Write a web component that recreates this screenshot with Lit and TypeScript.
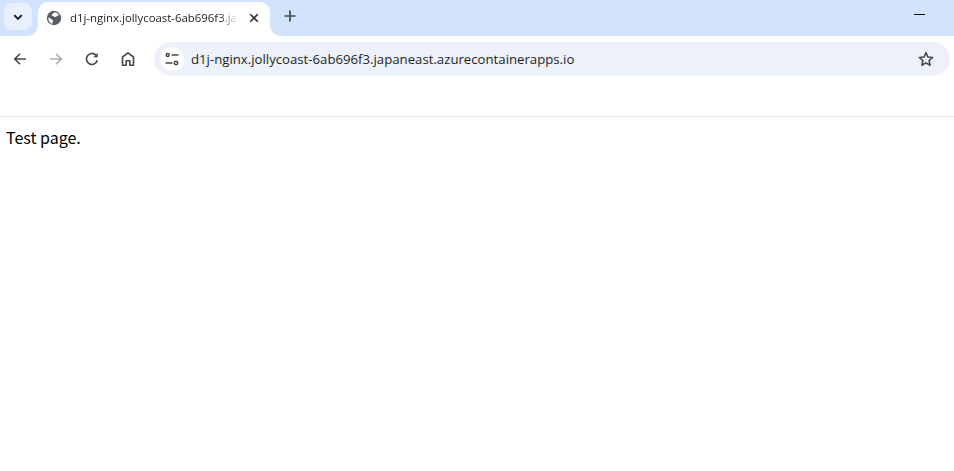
import { LitElement, html, css } from "lit";
import { customElement } from "lit/decorators.js";

@customElement("app-root")
export class AppRoot extends LitElement {
  static styles = css`
    :host { display: block; width: 954px; height: 471px; background: #fff; overflow: hidden; font-family: "Open Sans", "Noto Sans", sans-serif; color: #1f1f1f; }
    svg { display: block; }
    .strip { height: 36px; background: #d3e3fd; display: flex; align-items: flex-start; padding-left: 4px; box-sizing: border-box; }
    .search { width: 28px; height: 27px; margin-top: 3px; border-radius: 8px; background: #e8f0fe; display: flex; align-items: center; justify-content: center; }
    .tab { position: relative; width: 232px; height: 34px; margin: 2px 0 0 6px; background: #fff; border-radius: 10px 10px 0 0; display: flex; align-items: center; box-sizing: border-box; padding: 0 0 3px 8px; }
    .tab::before, .tab::after { content: ""; position: absolute; bottom: 0; width: 10px; height: 10px; background: radial-gradient(circle at var(--cx) 0, #d3e3fd 9.5px, #fff 10px); }
    .tab::before { left: -10px; --cx: 0; }
    .tab::after { right: -10px; --cx: 100%; }
    .title { font-size: 11.4px; width: 168px; margin-left: 8px; white-space: nowrap; overflow: hidden; color: #1f1f1f; -webkit-mask-image: linear-gradient(90deg, #000 150px, transparent 168px); mask-image: linear-gradient(90deg, #000 150px, transparent 168px); }
    .close { margin-left: 10px; }
    .plus { margin: 9px 0 0 13px; }
    .min { margin: 14px 29px 0 auto; width: 11px; height: 1px; background: #000; }
    .toolbar { height: 51px; display: flex; align-items: flex-start; box-sizing: border-box; padding: 6px 4px 0 0; }
    .nav { width: 36px; height: 34px; display: flex; align-items: center; justify-content: center; flex: none; }
    .navs { display: flex; padding-left: 2px; }
    .omni { flex: 1; height: 34px; margin-left: 8px; border-radius: 17px; background: #edf2fa; display: flex; align-items: center; padding: 0 16px 0 6px; }
    .site { width: 24px; height: 24px; border-radius: 50%; background: #fff; display: flex; align-items: center; justify-content: center; flex: none; }
    .url { flex: 1; margin-left: 7px; font-size: 13.2px; white-space: nowrap; color: #1f1f1f; }
    .bookmarks { border-bottom: 1px solid #e1e1e1; box-sizing: border-box; height: 30px; }
    .page { padding: 9px 6px; font-family: "Noto Sans CJK JP", "Noto Sans", sans-serif; font-size: 16px; line-height: 22px; color: #000; }
  `;

  render() {
    return html`
      <div class="strip">
        <div class="search">
          <svg width="12" height="12" viewBox="0 0 12 12"><path d="M2.2 4.2 6 8l3.8-3.8" fill="none" stroke="#1f1f1f" stroke-width="1.9"/></svg>
        </div>
        <div class="tab">
          <svg width="16" height="16" viewBox="0 0 16 16"><circle cx="8" cy="8" r="7.200" fill="#5a5e63"/><path d="M8.500 2.200c-.6 1.100-2.300 1.200-2.700 2.300-.3 1 .8 1.500 1.700 1.700.9.200 1.400.9 2.200.8.900-.2 1.100-1.100 1.900-1.400.6-.2 1.200-.3 1.500-.7-.9-1.500-2.600-2.500-4.600-2.700zM2.300 7.700C3.400 7.600 4.300 8.200 5 9c.7.800 1.800.9 2 1.900.2.800-.5 1.300-.6 2-.1.300-.1.600-.1 1C3.900 13.200 2.300 10.700 2.300 7.700z" fill="#fff"/></svg>
          <div class="title">d1j-nginx.jollycoast-6ab696f3.japaneast.azurecontainerapps.io</div>
          <svg class="close" width="12" height="12" viewBox="0 0 12 12"><path d="M2.200 2.200l7.600 7.600M9.800 2.200l-7.600 7.600" stroke="#333" stroke-width="1.600" fill="none"/></svg>
        </div>
        <svg class="plus" width="14" height="14" viewBox="0 0 14 14"><path d="M7 1.500v11M1.500 7h11" stroke="#444746" stroke-width="1.700" fill="none"/></svg>
        <div class="min"></div>
      </div>
      <div class="toolbar">
        <div class="navs">
          <div class="nav"><svg width="16" height="16" viewBox="0 0 16 16"><path d="M14 8H3M8 2.700 2.700 8 8 13.300" fill="none" stroke="#474747" stroke-width="1.600"/></svg></div>
          <div class="nav"><svg width="16" height="16" viewBox="0 0 16 16"><path d="M2 8h11M8 2.700 13.300 8 8 13.300" fill="none" stroke="#adadad" stroke-width="1.600"/></svg></div>
          <div class="nav"><svg width="16" height="16" viewBox="0 0 16 16"><path d="M13.300 9.200A5.500 5.500 0 1 1 12 4.200" fill="none" stroke="#474747" stroke-width="1.600"/><path d="M13.700 1.800v4.400H9.300z" fill="#474747"/></svg></div>
          <div class="nav"><svg width="16" height="16" viewBox="0 0 16 16"><path d="M8 1.800 2.500 6v8.200h3.700V9.800h3.600v4.400h3.700V6z" fill="none" stroke="#474747" stroke-width="1.600" stroke-linejoin="round"/></svg></div>
        </div>
        <div class="omni">
          <div class="site">
            <svg width="16" height="16" viewBox="0 0 16 16"><circle cx="3.700" cy="4" r="1.500" fill="none" stroke="#474747" stroke-width="1.500"/><path d="M7.500 4h7M1.500 12h7" stroke="#474747" stroke-width="1.500" fill="none"/><circle cx="12" cy="12" r="1.700" fill="none" stroke="#474747" stroke-width="1.500"/></svg>
          </div>
          <div class="url">d1j-nginx.jollycoast-6ab696f3.japaneast.azurecontainerapps.io</div>
          <svg width="16" height="16" viewBox="0 0 16 16"><path d="M8 1.700l1.900 4.300 4.700.5-3.500 3.100 1 4.600L8 11.900l-4.100 2.300 1-4.600-3.500-3.100 4.700-.5z" fill="none" stroke="#474747" stroke-width="1.600" stroke-linejoin="round"/></svg>
        </div>
      </div>
      <div class="bookmarks"></div>
      <div class="page">Test page.</div>
    `;
  }
}
